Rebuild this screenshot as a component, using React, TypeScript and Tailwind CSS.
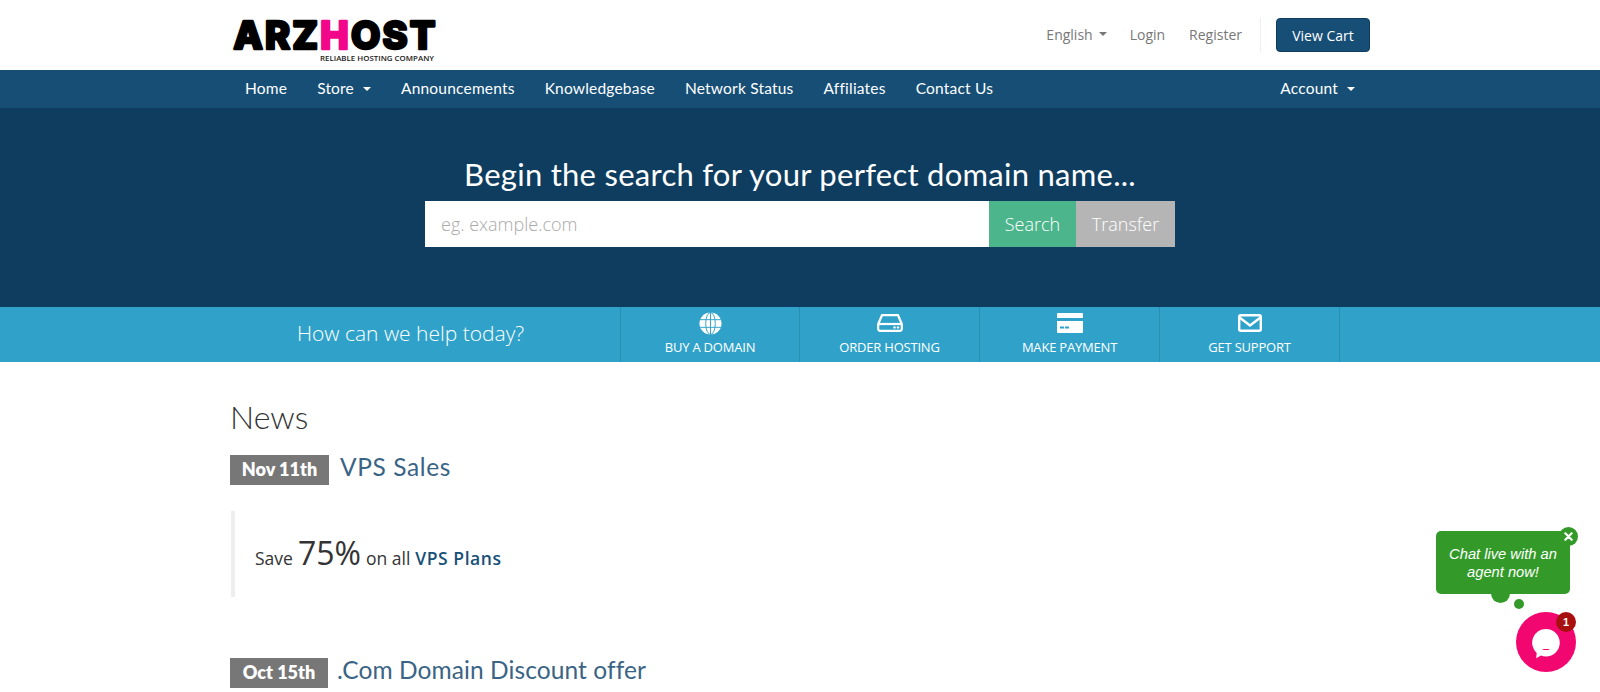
import React from 'react'

const display = "font-['Lato','Liberation_Sans',sans-serif]"

const navLinks = ['Home', 'Announcements', 'Knowledgebase', 'Network Status', 'Affiliates', 'Contact Us']

function Caret({ className = '' }: { className?: string }) {
  return <span className={`inline-block w-0 h-0 border-x-[4px] border-x-transparent border-t-[4px] border-t-current ${className}`} />
}

function Logo() {
  const letters = { stroke: '#000', strokeWidth: 2.6, strokeLinejoin: 'round' as const }
  return (
    <svg width="208" height="60" viewBox="0 0 208 60">
      <text x="3.500" y="44" fontFamily="Inter, sans-serif" fontSize="38" fontWeight="800" letterSpacing="2.200" fill="#000" {...letters}>
        ARZ<tspan fill="#f2068a" stroke="#f2068a">H</tspan>OST
      </text>
      <text x="204" y="56" textAnchor="end" fontFamily="'Open Sans', sans-serif" fontSize="7.900" fontWeight="600" fill="#222">
        RELIABLE HOSTING COMPANY
      </text>
    </svg>
  )
}

function GlobeIcon() {
  return (
    <svg width="23" height="23" viewBox="0 0 24 24" fill="#fff">
      <circle cx="12" cy="12" r="11.500" />
      <g fill="none" stroke="#30a2c9" strokeWidth="1">
        <ellipse cx="12" cy="12" rx="5" ry="11.500" />
        <path d="M1 8h22M1 16h22M12 0v24" />
      </g>
    </svg>
  )
}

function HostingIcon() {
  return (
    <svg width="26" height="18" viewBox="0 0 26 18" fill="none" stroke="#fff" strokeWidth="2.200">
      <path d="M1.200 10 5 1.200h16L24.800 10v5a1.800 1.800 0 0 1-1.800 1.800H3A1.800 1.800 0 0 1 1.200 15z" />
      <path d="M1.200 10h23.600" />
      <circle cx="17.500" cy="13.400" r="1.200" fill="#fff" stroke="none" />
      <circle cx="21" cy="13.400" r="1.200" fill="#fff" stroke="none" />
    </svg>
  )
}

function CardIcon() {
  return (
    <svg width="26" height="20" viewBox="0 0 26 20" fill="#fff">
      <path d="M1 0h24a1 1 0 0 1 1 1v4H0V1a1 1 0 0 1 1-1z" />
      <path d="M0 8h26v11a1 1 0 0 1-1 1H1a1 1 0 0 1-1-1z" />
      <rect x="3" y="13.500" width="4" height="2" fill="#30a2c9" />
      <rect x="8" y="13.500" width="4" height="2" fill="#30a2c9" />
    </svg>
  )
}

function MailIcon() {
  return (
    <svg width="24" height="18" viewBox="0 0 24 18" fill="none" stroke="#fff" strokeWidth="2.400">
      <rect x="1.200" y="1.200" width="21.600" height="15.600" rx="1.500" />
      <path d="m1.500 3.500 10.500 8 10.500-8" />
    </svg>
  )
}

const helpLinks = [
  { label: 'BUY A DOMAIN', icon: <GlobeIcon /> },
  { label: 'ORDER HOSTING', icon: <HostingIcon /> },
  { label: 'MAKE PAYMENT', icon: <CardIcon /> },
  { label: 'GET SUPPORT', icon: <MailIcon /> },
]

function NewsTitle({ date, title, dateWidth, titleClass }: { date: string; title: string; dateWidth: string; titleClass: string }) {
  return (
    <div className="flex items-center">
      <span className={`${dateWidth} h-[30px] bg-[#777] text-white text-[18px] font-extrabold pb-[1px] flex items-center justify-center ${display}`}>
        {date}
      </span>
      <a className={`text-[24.500px] leading-[30px] text-[#3a6485] -mt-[7px] ${titleClass} ${display}`}>{title}</a>
    </div>
  )
}

function ChatWidget() {
  return (
    <>
      {/* Chat bubble */}
      <div className="absolute left-[1436px] top-[531px] w-[134px] h-[63px] rounded-[5px] bg-[#339a2a] text-white text-[14.700px] leading-[18px] italic text-center flex items-center justify-center font-['Liberation_Sans',sans-serif]">
        <span>Chat live with an<br />agent now!</span>
        <span className="absolute left-[55px] top-[58px] w-[19px] h-[14px] rounded-b-full bg-[#339a2a]" />
      </div>
      <span className="absolute left-[1559px] top-[527px] w-[19px] h-[19px] rounded-full bg-[#339a2a] text-white flex items-center justify-center">
        <svg width="9" height="9" viewBox="0 0 10 10" stroke="#fff" strokeWidth="2.400" strokeLinecap="round">
          <path d="M1.500 1.500l7 7M8.500 1.500l-7 7" />
        </svg>
      </span>
      <span className="absolute left-[1514px] top-[599px] w-[10px] h-[10px] rounded-full bg-[#339a2a]" />

      {/* Launcher */}
      <div className="absolute left-[1516px] top-[612px] w-[60px] h-[60px] rounded-full bg-[#f2066f] flex items-center justify-center">
        <svg width="32" height="34" viewBox="0 0 36 38" className="mt-[3px] -ml-[1px]">
          <path d="M18 2a15.500 15.500 0 0 1 0 31c-2 0-4-.4-5.700-1L7 35l.5-6A15.500 15.500 0 0 1 18 2z" fill="#fff" />
          <path d="M13.500 24.500c2.500 1.800 6.500 1.800 9 0z" fill="#f2066f" />
        </svg>
      </div>
      <span className="absolute left-[1556px] top-[612px] w-[20px] h-[20px] rounded-full bg-[#a81010] text-white text-[11px] font-bold flex items-center justify-center font-['Liberation_Sans',sans-serif]">
        1
      </span>
    </>
  )
}

export default function App() {
  return (
    <div className="relative h-[692px] overflow-hidden bg-white font-['Open_Sans',sans-serif] text-[#333]">
      {/* Header */}
      <header className="h-[70px] w-[1170px] mx-auto px-[15px] flex items-center justify-between">
        <Logo />
        <div className="flex items-center text-[14px] text-[#777]">
          <span className="flex items-center gap-[6px] -mt-[2px] mr-[-1px]">English <Caret /></span>
          <span className="ml-[24px] -mt-[2px]">Login</span>
          <span className="ml-[24px] -mt-[2px]">Register</span>
          <span className="ml-[18px] w-px h-[34px] bg-[#eee]" />
          <span className="ml-[15px] w-[94px] h-[34px] rounded-[4px] bg-[#164e76] border border-[#0e3d60] text-white font-medium text-[14px] flex items-center justify-center">
            View Cart
          </span>
        </div>
      </header>

      {/* Main nav */}
      <nav className="h-[38px] bg-[#164e76] pb-[1px]">
        <div className={`w-[1170px] h-full mx-auto px-[15px] flex items-center justify-between text-white text-[15.500px] tracking-[0.2px] ${display}`}>
          <div className="flex items-center">
            <span className="ml-[15px]">{navLinks[0]}</span>
            <span className="ml-[30px] flex items-center gap-[9px]">Store <Caret /></span>
            {navLinks.slice(1).map(l => (
              <span key={l} className="ml-[30px]">{l}</span>
            ))}
          </div>
          <span className="mr-[15px] flex items-center gap-[9px]">Account <Caret /></span>
        </div>
      </nav>

      {/* Domain search */}
      <section className="h-[199px] bg-[#0e3d60] flex flex-col items-center">
        <h2 className={`mt-[45px] h-[42px] text-[31px] leading-[42px] tracking-[0.27px] text-white ${display}`}>
          Begin the search for your perfect domain name...
        </h2>
        <div className="mt-[6px] w-[750px] h-[46px] flex text-[18px] font-light">
          <div className="flex-1 bg-white text-[#aaa] pl-[16px] flex items-center">eg. example.com</div>
          <div className="w-[87px] bg-[#4cb58c] text-white flex items-center justify-center">Search</div>
          <div className="w-[99px] bg-[#b5b5b5] text-white flex items-center justify-center">Transfer</div>
        </div>
      </section>

      {/* Help bar */}
      <section className="h-[55px] bg-[#30a2c9]">
        <div className="w-[1170px] h-full mx-auto flex text-white">
          <div className="w-[405px] flex items-center justify-center text-[21px] font-light pr-[14px] pb-[2px]">
            How can we help today?
          </div>
          <div className="flex border-l border-[#2a90b3]">
            {helpLinks.map(h => (
              <div key={h.label} className="w-[180px] first:w-[179px] border-r border-[#2a90b3] flex flex-col items-center pt-[3px]">
                <span className="h-[26px] flex items-center">{h.icon}</span>
                <span className="mt-[3px] text-[13px] leading-[16px] font-medium tracking-[-0.2px]">{h.label}</span>
              </div>
            ))}
          </div>
        </div>
      </section>

      {/* News */}
      <main className="w-[1170px] mx-auto px-[15px]">
        <h2 className={`mt-[35px] text-[32px] leading-[40px] text-[#333] font-light ${display}`}>News</h2>
        <div className="mt-[18px]">
          <NewsTitle date="Nov 11th" title="VPS Sales" dateWidth="w-[99px]" titleClass="ml-[11px] tracking-[0.6px]" />
        </div>
        <blockquote className="mt-[26px] h-[86px] ml-px border-l-[4px] border-[#eee] pl-[20px] flex items-center text-[17.500px]">
          <span className="flex items-baseline gap-[5px]">
            Save <span className="text-[32px] leading-none">75%</span> on all <b className="font-semibold text-[#175078] tracking-[0.55px]">VPS Plans</b>
          </span>
        </blockquote>
        <div className="mt-[61px]">
          <NewsTitle date="Oct 15th" title=".Com Domain Discount offer" dateWidth="w-[98px]" titleClass="ml-[9px] tracking-[0.08px]" />
        </div>
      </main>

      <ChatWidget />
    </div>
  )
}
